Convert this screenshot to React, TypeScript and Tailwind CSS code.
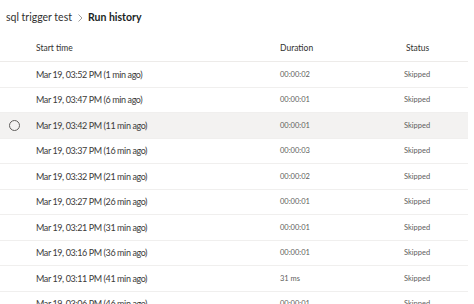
const runs = [
  { time: 'Mar 19, 03:52 PM (1 min ago)', duration: '00:00:02' },
  { time: 'Mar 19, 03:47 PM (6 min ago)', duration: '00:00:01' },
  { time: 'Mar 19, 03:42 PM (11 min ago)', duration: '00:00:01', selected: true },
  { time: 'Mar 19, 03:37 PM (16 min ago)', duration: '00:00:03' },
  { time: 'Mar 19, 03:32 PM (21 min ago)', duration: '00:00:02' },
  { time: 'Mar 19, 03:27 PM (26 min ago)', duration: '00:00:01' },
  { time: 'Mar 19, 03:21 PM (31 min ago)', duration: '00:00:01' },
  { time: 'Mar 19, 03:16 PM (36 min ago)', duration: '00:00:01' },
  { time: 'Mar 19, 03:11 PM (41 min ago)', duration: '31 ms' },
  { time: 'Mar 19, 03:06 PM (46 min ago)', duration: '00:00:01' },
];

export default function App() {
  return (
    <div className="h-[304px] w-[474px] overflow-hidden bg-white font-['Lato',sans-serif] text-[#323130]">
      {/* Breadcrumb */}
      <div className="flex h-[36px] items-center pl-[6px] text-[10.5px]">
        <span className="text-[#323130]">sql trigger test</span>
        <svg width="10" height="10" viewBox="0 0 10 10" className="mx-[3px]">
          <path d="M3.5 1.5L7 5L3.5 8.5" fill="none" stroke="#a19f9d" strokeWidth="1" />
        </svg>
        <span className="font-bold text-[#201f1e]">Run history</span>
      </div>

      <div className="w-[468px]">
        {/* Header */}
        <div className="flex h-[26px] items-center border-b border-[#edebe9] text-[8.5px]">
          <div className="w-[36px]" />
          <div className="w-[244px]">Start time</div>
          <div className="w-[126px]">Duration</div>
          <div>Status</div>
        </div>

        {runs.map((r, i) => (
          <div
            key={i}
            className={`flex h-[25.5px] items-center border-b border-[#f0efee] ${r.selected ? 'bg-[#f3f2f1]' : ''}`}
          >
            <div className="flex w-[36px] justify-center pr-[8px]">
              {r.selected && (
                <span className="h-[11px] w-[11px] rounded-full border border-[#605e5c]" />
              )}
            </div>
            <div className="w-[244px] text-[9px] tracking-[-0.4px] text-[#3b3a39]">{r.time}</div>
            <div className="w-[124px] text-[7.5px] text-[#605e5c]">{r.duration}</div>
            <div className="text-[7.5px] text-[#605e5c]">Skipped</div>
          </div>
        ))}
      </div>
    </div>
  );
}
